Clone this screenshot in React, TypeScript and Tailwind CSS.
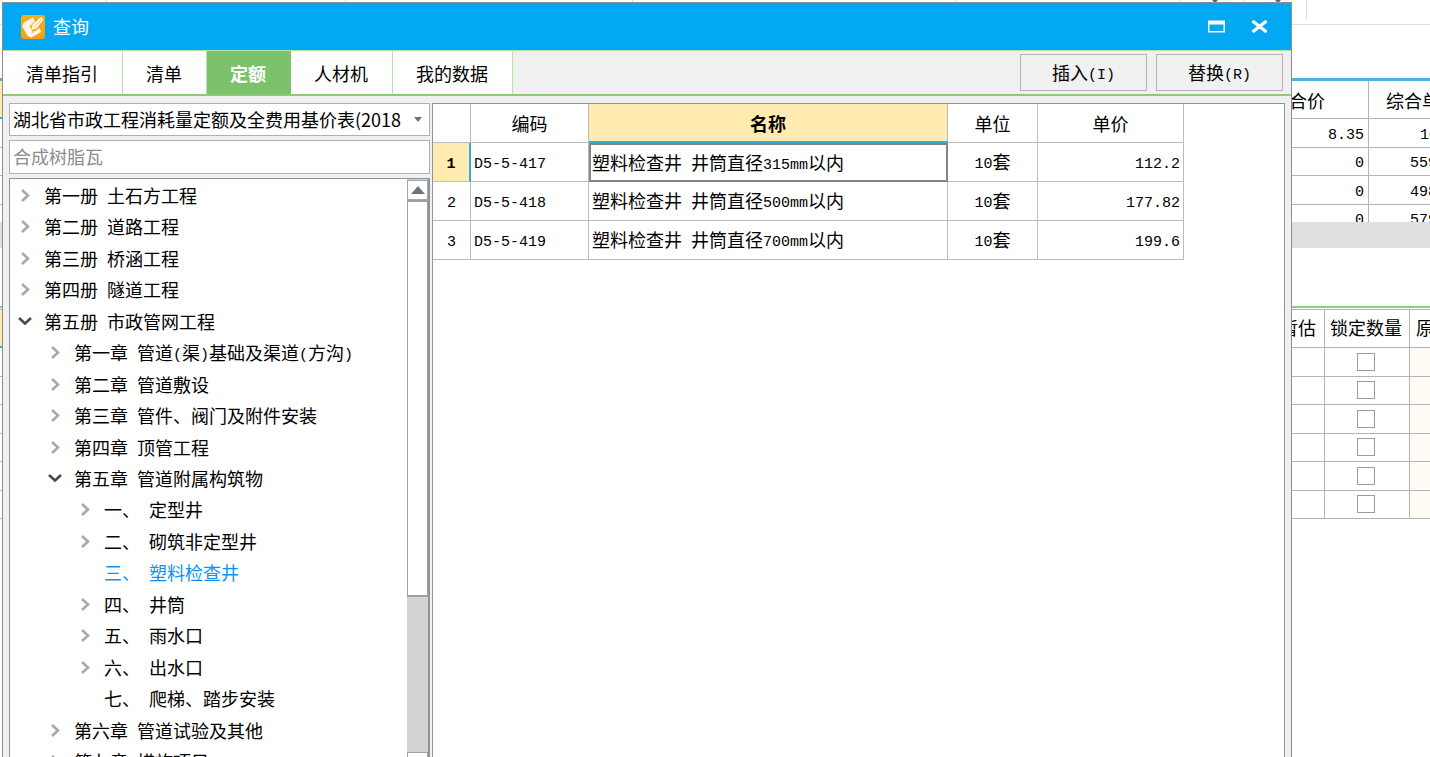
import { Fragment } from 'react';
import clsx from 'clsx';

type TreeNode = {
  label: string;
  level: 0 | 1 | 2;
  state: 'closed' | 'open' | 'leaf';
  active?: boolean;
};

const tabs = ['清单指引', '清单', '定额', '人材机', '我的数据'];

const toolGroups = [
  { width: 'w-[107px]', caret: false },
  { width: 'w-[239px]', caret: false },
  { width: 'w-[287px]', caret: false },
  { width: 'w-[323px]', caret: false },
  { width: 'w-[225px]', caret: false },
  { width: 'w-[63px]', caret: true },
  { width: 'w-[63px]', caret: true },
];

const tree: TreeNode[] = [
  { label: '第一册 土石方工程', level: 0, state: 'closed' },
  { label: '第二册 道路工程', level: 0, state: 'closed' },
  { label: '第三册 桥涵工程', level: 0, state: 'closed' },
  { label: '第四册 隧道工程', level: 0, state: 'closed' },
  { label: '第五册 市政管网工程', level: 0, state: 'open' },
  { label: '第一章 管道(渠)基础及渠道(方沟)', level: 1, state: 'closed' },
  { label: '第二章 管道敷设', level: 1, state: 'closed' },
  { label: '第三章 管件、阀门及附件安装', level: 1, state: 'closed' },
  { label: '第四章 顶管工程', level: 1, state: 'closed' },
  { label: '第五章 管道附属构筑物', level: 1, state: 'open' },
  { label: '一、 定型井', level: 2, state: 'closed' },
  { label: '二、 砌筑非定型井', level: 2, state: 'closed' },
  { label: '三、 塑料检查井', level: 2, state: 'leaf', active: true },
  { label: '四、 井筒', level: 2, state: 'closed' },
  { label: '五、 雨水口', level: 2, state: 'closed' },
  { label: '六、 出水口', level: 2, state: 'closed' },
  { label: '七、 爬梯、踏步安装', level: 2, state: 'leaf' },
  { label: '第六章 管道试验及其他', level: 1, state: 'closed' },
  { label: '第七章 措施项目', level: 1, state: 'closed' },
];

const rows = [
  { code: 'D5-5-417', name: '塑料检查井 井筒直径315mm以内', unit: '10套', price: '112.2' },
  { code: 'D5-5-418', name: '塑料检查井 井筒直径500mm以内', unit: '10套', price: '177.82' },
  { code: 'D5-5-419', name: '塑料检查井 井筒直径700mm以内', unit: '10套', price: '199.6' },
];

const priceRows = [
  ['8.35', '10'],
  ['0', '559'],
  ['0', '498'],
  ['0', '579'],
];

// Latin runs are set in a mono face exactly half as wide as a Chinese character
function Txt({ children }: { children: string }) {
  return (
    <span className="whitespace-pre">
      {children.split(/([\x20-\x7e]+)/).map((part, i) =>
        i % 2 ? (
          <span key={i} className="align-[1px] font-['Liberation_Mono',monospace] text-[15px] leading-none">{part}</span>
        ) : (
          <Fragment key={i}>{part}</Fragment>
        ),
      )}
    </span>
  );
}

function AppIcon() {
  return (
    <svg viewBox="0 0 24 24" className="h-6 w-6" aria-hidden="true">
      <defs>
        <linearGradient id="logo" x1="0" y1="0" x2="0" y2="1">
          <stop offset="0" stopColor="#f2b01c" />
          <stop offset="1" stopColor="#fb9d14" />
        </linearGradient>
      </defs>
      <rect width="24" height="24" rx="3" fill="url(#logo)" />
      <path d="M12 2.500 3 7.500 1 11l5.500 10 4 1.500 9.500-5.500-1.500-4-7 4-2.500-5.500L14 7z" fill="#fff8ea" />
      <path d="M20 2 22.500 4.500 15.500 13.500l-5 1.500 1-5z" fill="#fff8ea" />
      <path d="m20 5-6.500 7M7 12l6-5M10 18.500l7-4" fill="none" stroke="#f9bd55" strokeWidth="0.8" />
    </svg>
  );
}

function Chevron({ open }: { open: boolean }) {
  return (
    <svg viewBox="0 0 16 16" className="h-4 w-4" fill="none" strokeWidth="2.6" aria-hidden="true">
      {open ? (
        <path d="M2 4 8 9.500 14 4" stroke="#4a4a4a" />
      ) : (
        <path d="M5 2 11 7.500 5 13" stroke="#a8a8a8" />
      )}
    </svg>
  );
}

function MainWindow() {
  const line = 'border-[#b4b4b4] p-0';
  return (
    <div className="flex flex-col">
      <div className="flex h-[25px] border-b border-[#dedede]">
        {toolGroups.map((group, i) => (
          <div key={i} className={clsx('flex h-5 shrink-0 justify-center border-r border-[#dedede] pl-1.5', group.width)}>
            {group.caret && (
              <svg viewBox="0 0 8 3" className="h-[3px] w-2" aria-hidden="true">
                <path d="M1 0h6L4 3z" fill="#5b5f70" />
              </svg>
            )}
          </div>
        ))}
      </div>
      <div className="h-[53px]" />
      <div className="h-36 overflow-hidden border-t-[3px] border-[#49b4df]">
        <table className="h-[152px] w-full table-fixed border-separate border-spacing-0">
          <thead>
            <tr className="h-[38px]">
              <th className="border-b-2 border-[#3aa9d8] bg-[#ffebb0] p-0" />
              <th className={clsx(line, 'w-[123px] border-r border-b font-normal')}>合价</th>
              <th className={clsx(line, 'w-[61px] border-b font-normal')}>
                <div className="pl-[17px] text-left whitespace-nowrap">综合单价</div>
              </th>
            </tr>
          </thead>
          <tbody className="text-right leading-6">
            {priceRows.map(([total, unit], i) => (
              <tr key={i}>
                <td className={clsx(line, 'border-b')} />
                <td className={clsx(line, 'border-r border-b')}>
                  <div className="pr-1 pb-0.5"><Txt>{total}</Txt></div>
                </td>
                <td className={clsx(line, 'border-b text-left')}>
                  <div className={clsx('pb-0.5', i ? 'pl-[41px]' : 'pl-[51px]')}><Txt>{unit}</Txt></div>
                </td>
              </tr>
            ))}
          </tbody>
        </table>
      </div>
      <div className="h-[26px] bg-[#e0e0e0]" />
      <div className="h-[58px]" />
      <div className="border-t-2 border-[#8dd07c] pt-px">
        <table className="h-[210px] w-full table-fixed border-separate border-spacing-0 border-t border-[#b4b4b4]">
          <thead>
            <tr className="h-[38px]">
              <th className="border-b-2 border-[#3aa9d8] bg-[#ffebb0] p-0" />
              <th className={clsx(line, 'w-[60px] border-r border-b text-right font-normal')}>
                <div className="pr-2 pb-1">暂估</div>
              </th>
              <th className={clsx(line, 'w-[85px] border-r border-b font-normal whitespace-nowrap')}>
                <div className="pr-0.5 pb-1">锁定数量</div>
              </th>
              <th className={clsx(line, 'w-5 border-b font-normal')}>
                <div className="pb-1 pl-1.5 text-left whitespace-nowrap">原始</div>
              </th>
            </tr>
          </thead>
          <tbody>
            {[1, 2, 3, 4, 5, 6].map((n) => (
              <tr key={n}>
                <td className={clsx(line, 'border-b')} />
                <td className={clsx(line, 'border-r border-b')} />
                <td className={clsx(line, 'border-r border-b')}>
                  <div className="flex justify-center pr-0.5">
                    <input
                      type="checkbox"
                      aria-label={`锁定数量 ${n}`}
                      className="h-[18px] w-[18px] appearance-none border border-[#9c9c9c] bg-white"
                    />
                  </div>
                </td>
                <td className={clsx(line, 'border-b bg-[#fefaf4]')} />
              </tr>
            ))}
          </tbody>
        </table>
      </div>
    </div>
  );
}

function TitleBar() {
  return (
    <header className="flex h-[47px] shrink-0 items-center bg-[#02a9f2] pr-[22px] pl-[18px] text-white">
      <AppIcon />
      <h1 className="ml-2 flex-1 pb-0.5">查询</h1>
      <button aria-label="最大化" className="mr-[25px]">
        <svg viewBox="0 0 18 14" className="h-3.5 w-[18px]" aria-hidden="true">
          <path d="M0 .5h17v12H0zM1.500 4.500v6.500h14V4.500z" fill="#fff" fillRule="evenodd" />
        </svg>
      </button>
      <button aria-label="关闭">
        <svg viewBox="0 0 18 14" className="h-3.5 w-[18px]" aria-hidden="true">
          <path d="m1.500 1 14 11M15.500 1l-14 11" stroke="#fff" strokeWidth="3.200" />
        </svg>
      </button>
    </header>
  );
}

function TabBar() {
  return (
    <div className="flex h-[46px] shrink-0 border-t border-b-2 border-t-[#b5e3a8] border-b-[#8dcb7a]">
      <nav className="flex">
        {tabs.map((tab) => (
          <button
            key={tab}
            className={clsx(
              'border-r pr-6 pl-[23px]',
              tab === '定额' ? 'border-[#7cc26a] bg-[#7cc26a] font-bold text-white' : 'border-[#b5e3a8] bg-white',
            )}
          >
            {tab}
          </button>
        ))}
      </nav>
      <div className="ml-auto flex items-center gap-[9px] pr-2">
        <button className="h-[37px] w-[127px] border border-[#b4b4b4] bg-[#f1f1f1] pb-0.5"><Txt>插入(I)</Txt></button>
        <button className="h-[37px] w-[127px] border border-[#b4b4b4] bg-[#f1f1f1] pb-0.5"><Txt>替换(R)</Txt></button>
      </div>
    </div>
  );
}

function ScrollBar() {
  return (
    <div className="flex w-[21px] shrink-0 flex-col bg-[#d3d3d3]">
      <button aria-label="向上滚动" className="mt-px flex h-5 items-center justify-center border border-[#a6a6a6] bg-white">
        <svg viewBox="0 0 14 8" className="h-2 w-3.5" aria-hidden="true">
          <path d="M7 0 14 8H0z" fill="#6e7380" />
        </svg>
      </button>
      <div className="h-[397px] border border-y-2 border-[#a0a0a0] bg-white" />
      <div className="flex-1" />
      <button aria-label="向下滚动" className="h-[5px] border border-b-0 border-[#a0a0a0] bg-white" />
    </div>
  );
}

function Sidebar() {
  return (
    <aside className="flex w-[421px] shrink-0 flex-col">
      <div className="relative h-[33px] shrink-0">
        <select
          aria-label="定额库"
          className="h-full w-full appearance-none border border-[#b0b0b0] bg-white pr-7 pb-0.5 pl-[3px] outline-none"
        >
          <option>湖北省市政工程消耗量定额及全费用基价表(2018</option>
        </select>
        <svg viewBox="0 0 8 5" className="pointer-events-none absolute top-3.5 right-2 h-[5px] w-2" aria-hidden="true">
          <path d="M0 0h8L4 5z" fill="#6e7380" />
        </svg>
      </div>
      <input
        aria-label="搜索"
        placeholder="合成树脂瓦"
        className="mt-1 h-[34px] shrink-0 border border-[#b0b0b0] bg-white px-[3px] pb-0.5 outline-none placeholder:text-[#8c8c8c]"
      />
      <div className="mt-1 flex min-h-0 flex-1 overflow-hidden border border-r-2 border-b-0 border-[#8f959f] bg-white">
        <ul className="grid h-[599px] flex-1 auto-rows-fr pt-px">
          {tree.map((node) => (
            <li
              key={node.label}
              className={clsx('flex items-center', node.level === 1 && 'pl-[30px]', node.level === 2 && 'pl-[60px]')}
            >
              <button className={clsx('flex items-center gap-1', node.active && 'text-[#0a93f5]')}>
                <span className="flex w-[30px] justify-center">
                  {node.state !== 'leaf' && <Chevron open={node.state === 'open'} />}
                </span>
                <span className="pb-0.5"><Txt>{node.label}</Txt></span>
              </button>
            </li>
          ))}
        </ul>
        <ScrollBar />
      </div>
    </aside>
  );
}

function ResultTable() {
  const cell = 'border-r border-b border-[#bcbcbc]';
  return (
    <div className="min-w-0 flex-1 overflow-hidden border border-b-0 border-[#8f959f] bg-white">
      <table className="w-[751px] table-fixed border-separate border-spacing-0 leading-6">
        <thead>
          <tr className="h-[39px]">
            <th className={clsx(cell, 'w-[38px]')} />
            <th className={clsx(cell, 'w-[118px] font-normal')}>编码</th>
            <th className="w-[359px] border-r border-b-2 border-r-[#bcbcbc] border-b-[#3aa9d8] bg-[#ffebb0] font-bold">名称</th>
            <th className={clsx(cell, 'w-[90px] font-normal')}>单位</th>
            <th className={clsx(cell, 'w-[146px] font-normal')}>单价</th>
          </tr>
        </thead>
        <tbody>
          {rows.map((row, i) => (
            <tr key={row.code} className="h-[39px]">
              <td
                className={clsx(
                  'border-b border-b-[#bcbcbc] p-0 pb-0.5 text-center',
                  i === 0 ? 'border-r-2 border-r-[#3aa9d8] bg-[#ffebb0] font-bold' : 'border-r border-r-[#bcbcbc]',
                )}
              >
                <Txt>{String(i + 1)}</Txt>
              </td>
              <td className={clsx(cell, 'pt-0 pb-0.5 pl-[3px]')}><Txt>{row.code}</Txt></td>
              <td className={i === 0 ? 'border-2 border-[#858585] pt-0 pb-0.5 pl-px' : clsx(cell, 'pt-0 pb-0.5 pl-[3px]')}>
                <Txt>{row.name}</Txt>
              </td>
              <td className={clsx(cell, 'p-0 pb-0.5 text-center')}><Txt>{row.unit}</Txt></td>
              <td className={clsx(cell, 'pt-0 pr-[3px] pb-0.5 text-right')}><Txt>{row.price}</Txt></td>
            </tr>
          ))}
        </tbody>
      </table>
    </div>
  );
}

export default function App() {
  return (
    <div className="relative min-h-screen overflow-hidden bg-white font-['Noto_Sans_CJK_SC',sans-serif] text-[18px] leading-6 text-black">
      <MainWindow />
      <section className="absolute top-0.5 right-[138px] bottom-0 left-0.5 flex flex-col border border-b-0 border-[#8f8f8f] bg-[#f0f0f0]">
        <TitleBar />
        <TabBar />
        <div className="flex min-h-0 flex-1 gap-0.5 pt-[7px] pr-1.5 pl-1.5">
          <Sidebar />
          <ResultTable />
        </div>
      </section>
    </div>
  );
}
